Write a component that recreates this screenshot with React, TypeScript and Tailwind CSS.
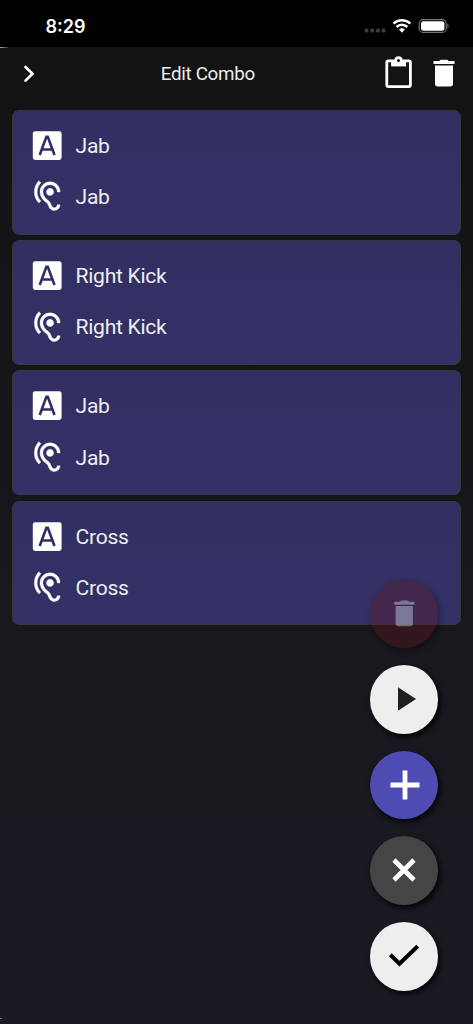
import type { ReactNode } from "react";

const combo = ["Jab", "Right Kick", "Jab", "Cross"];

function Trash({ className }: { className: string }) {
  return (
    <svg viewBox="0 0 24 24" fill="currentColor" className={className}>
      <path d="M6 19.3c0 .95.75 1.7 1.7 1.7h8.6c.95 0 1.7-.75 1.7-1.7V7H6zM19 4h-3.6c-.6 0-.5-.9-1.5-.9h-3.8c-1 0-.9.9-1.5.9H5v2h14z" />
    </svg>
  );
}

function LetterIcon() {
  return (
    <svg viewBox="0 0 35 35" className="size-[35px]">
      <rect x="2.8" y="3.2" width="28.8" height="28.8" rx="2.4" fill="white" />
      <path d="M9.7 27 16.4 8.9h1.4L24.5 27M12 21.5h10.3" fill="none" stroke="#312f62" strokeWidth="2.6" />
    </svg>
  );
}

function EarIcon() {
  return (
    <svg viewBox="0 0 24 24" fill="white" stroke="white" strokeWidth="0.25" className="-mt-[0.2px] mr-[0.6px] size-[34.4px]">
      <path d="M17 20c-.29 0-.56-.06-.76-.15-.71-.37-1.21-.88-1.71-2.38-.51-1.56-1.47-2.29-2.39-3-.79-.61-1.61-1.24-2.32-2.53C9.29 10.98 9 9.93 9 9c0-2.8 2.2-5 5-5s5 2.2 5 5h2c0-3.93-3.07-7-7-7S7 5.07 7 9c0 1.26.38 2.65 1.07 3.9.91 1.65 1.98 2.48 2.85 3.15.81.62 1.39 1.07 1.71 2.05.6 1.82 1.37 2.84 2.73 3.55.51.23 1.07.35 1.64.35 2.21 0 4-1.79 4-4h-2c0 1.1-.9 2-2 2M7.64 2.64 6.22 1.22C4.23 3.21 3 5.96 3 9s1.23 5.79 3.22 7.78l1.41-1.41C6.01 13.74 5 11.49 5 9s1.01-4.74 2.64-6.36M11.5 9c0 1.38 1.12 2.5 2.5 2.5s2.5-1.12 2.5-2.5-1.12-2.5-2.5-2.5-2.5 1.12-2.5 2.5" />
    </svg>
  );
}

function StatusBar() {
  return (
    <div className="flex h-[47px] items-start justify-between bg-black pr-[24.5px] pl-[45.5px] text-white">
      <span className="mt-[14.5px] font-[Inter,sans-serif] text-[18px] leading-6 font-semibold">8:29</span>
      <svg width="85" height="16" viewBox="0 0 85 16" className="mt-[18px]">
        <g fill="#3c3c3e">
          <rect x="0.5" y="10.5" width="4" height="4" rx="1.5" />
          <rect x="6.3" y="10.5" width="4" height="4" rx="1.5" />
          <rect x="11.9" y="10.5" width="4" height="4" rx="1.5" />
          <rect x="17.5" y="10.5" width="4" height="4" rx="1.5" />
        </g>
        <g fill="none" stroke="white" strokeWidth="2.5">
          <path d="M29.5 5.6a12.2 12.2 0 0 1 16.8 0" />
          <path d="M32.5 9a7.8 7.8 0 0 1 10.8 0" />
        </g>
        <path d="M35 11.6a4.2 4.2 0 0 1 5.8 0L37.9 14.8z" fill="white" />
        <rect x="55.2" y="1.6" width="27" height="12.8" rx="4" fill="none" stroke="#77777a" strokeWidth="1.1" />
        <rect x="57" y="3.2" width="23.4" height="9.6" rx="2.5" fill="white" />
        <path d="M83.3 5.9c1.8.4 1.8 3.8 0 4.2z" fill="#77777a" />
      </svg>
    </div>
  );
}

function Header() {
  return (
    <header className="grid h-[63px] grid-cols-[150px_1fr_150px] items-start">
      <svg width="14" height="20" viewBox="0 0 14 20" fill="none" stroke="white" strokeWidth="2.7" strokeLinecap="round" className="mt-[16.5px] ml-[23px]">
        <path d="m2.5 3 7 6.8-7 6.8" />
      </svg>
      <h1 className="mt-[15px] pl-[10.7px] text-[18.8px] leading-6 tracking-[-0.3px] whitespace-nowrap text-[#ececec]">Edit Combo</h1>
      <div className="flex justify-end pr-[11px]">
        <svg width="28" height="34" viewBox="0 0 28 34" className="mt-[8px] mr-[14px]">
          <rect x="2.8" y="5.9" width="23.6" height="25.8" rx="1.6" fill="none" stroke="white" strokeWidth="2.8" />
          <path d="M7.1 5h15v6.4h-15z" fill="white" />
          <circle cx="14.5" cy="5.3" r="4.1" fill="white" />
          <circle cx="14.5" cy="5.5" r="1.5" fill="#121213" />
        </svg>
        <Trash className="mt-[8px] -mr-[0.4px] size-9 text-white" />
      </div>
    </header>
  );
}

function Fab({ className, children }: { className: string; children: ReactNode }) {
  return (
    <button className={`flex size-[68.6px] items-center justify-center rounded-full shadow-[2px_3px_5px_1px_rgba(0,0,0,0.7)] ${className}`}>
      {children}
    </button>
  );
}

export default function App() {
  return (
    <div className="relative h-[1024px] w-[473px] overflow-hidden bg-linear-to-b from-[#121213] via-[#17171b] to-[#1a1a23] font-[Roboto,sans-serif]">
      <StatusBar />
      <Header />
      <main className="flex flex-col gap-[5.6px] px-[11.6px]">
        {combo.map((name, i) => (
          <section key={i} className="flex h-[124.6px] flex-col gap-[16.5px] rounded-[7px] border border-[#373739] bg-linear-to-b from-[#312f62] to-[#333166] pt-[17px] pl-[17px] text-[21.1px] leading-[35px] tracking-[-0.3px] text-[#eeeeee]">
            <div className="flex h-[35px] gap-[11px]">
              <LetterIcon />
              <span>{name}</span>
            </div>
            <div className="flex h-[35px] gap-[11px]">
              <EarIcon />
              <span className="-mt-[0.3px]">{name}</span>
            </div>
          </section>
        ))}
      </main>
      <div className="absolute top-[579.3px] left-[369.8px] flex flex-col gap-[17.1px]">
        <Fab className="bg-[#651520] text-white opacity-35">
          <Trash className="size-[34.5px]" />
        </Fab>
        <Fab className="bg-[#eeeeee]">
          <svg width="20" height="26" viewBox="0 0 20 26" className="ml-[5px]">
            <path d="M1 1.3v23.4L19 13z" fill="#231f20" />
          </svg>
        </Fab>
        <Fab className="bg-[#4e4cb2]">
          <svg width="30" height="30" viewBox="0 0 30 30" stroke="white" strokeWidth="4.8" className="mt-[1px] ml-[1px]">
            <path d="M15 .5v29M.5 15h29" />
          </svg>
        </Fab>
        <Fab className="bg-[#454545]">
          <svg width="26" height="26" viewBox="0 0 26 26" stroke="white" strokeWidth="4.6" className="-mt-[1px]">
            <path d="m3 3 20 20M23 3 3 23" />
          </svg>
        </Fab>
        <Fab className="bg-[#eeeeee]">
          <svg width="32" height="24" viewBox="0 0 32 24" fill="none" stroke="black" strokeWidth="4" className="-mt-[1px]">
            <path d="m2.3 10.8 9.2 9L29.7 2.3" />
          </svg>
        </Fab>
      </div>
      <div className="absolute top-[47px] left-0 h-px w-2 bg-linear-to-r from-[#aaaaaa] to-[#333333]" />
      <div className="absolute top-[1018px] left-0 h-px w-0.5 bg-[#777777]" />
    </div>
  );
}
